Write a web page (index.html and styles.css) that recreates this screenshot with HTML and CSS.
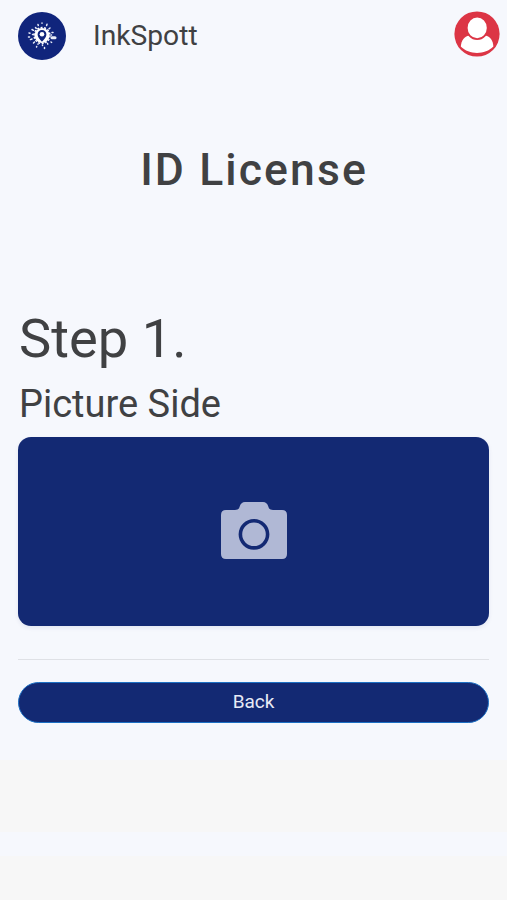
FILE: index.html
```html
<!DOCTYPE html>
<html lang="en">
<head>
<meta charset="utf-8">
<meta name="viewport" content="width=device-width, initial-scale=1">
<title>InkSpott</title>
<link rel="stylesheet" href="styles.css">
</head>
<body>
<main class="page">
  <header class="topbar">
    <svg class="logo" viewBox="0 0 48 48" aria-hidden="true">
      <circle cx="24" cy="24" r="24" fill="#10257c"/>
      <circle cx="24" cy="23.5" r="7.6" fill="#fff"/>
      <circle cx="24" cy="23.5" r="8" fill="none" stroke="#fff" stroke-width="1.4" stroke-dasharray="2 1.6"/>
      <g stroke="#e8ecf8" stroke-linecap="round" stroke-width="1.5">
        <path d="M24 11v.2M20 12.5l.3 1M29 12.2l-.4 1.4M17.5 15.5l.8 1M32 16l-1 .8M14 17.5l1.5.8M11 21l1 .2M14.5 22.5h1.2M10.5 25h1M14 27l-1.6.6M16.5 30l-1 1M20 32v.3M18.5 35l.2-.6M24.5 33v.4M26.5 35.5v1M29.5 31.5l.3.6M33 30l.6.4M34 20.5h1M33 23h.5"/>
        <path d="M34 25.8h3" stroke-width="3"/>
      </g>
      <path fill="#10257c" d="M24 18a4.4 4.4 0 0 0-4.4 4.5c0 3.1 4.4 7.3 4.4 7.3s4.4-4.2 4.4-7.3a4.4 4.4 0 0 0-4.4-4.5z"/>
      <circle cx="24" cy="22.3" r="2.3" fill="#fff"/>
    </svg>
    <span class="brand">InkSpott</span>
    <svg class="avatar" viewBox="0 0 46 46" aria-label="Account">
      <circle cx="23" cy="23" r="22.6" fill="#dc3545"/>
      <path fill="#fff" d="M6.8 35.5C7.3 29 10.5 25.4 15 24.4H31.4C36 25.4 39 29 39.4 35.5C31 44 15 44 6.8 35.5z"/>
      <ellipse cx="23.2" cy="16.9" rx="10.5" ry="11.2" fill="#fff" stroke="#dc3545" stroke-width="1.8"/>
    </svg>
  </header>
  <h1 class="title">ID License</h1>
  <section class="step">
    <h2 class="step-name">Step 1.</h2>
    <h3 class="step-side">Picture Side</h3>
    <button class="capture" aria-label="Take picture">
      <svg class="camera" viewBox="0 0 66 58">
        <path fill="#b0b8d5" d="M5 9H14Q18 9 18.7 5.5Q20 1 24 1H42Q46 1 47.3 5.5Q48 9 52 9H61Q66 9 66 14V53Q66 58 61 58H5Q0 58 0 53V14Q0 9 5 9z"/>
        <circle cx="33" cy="33.3" r="13.6" fill="none" stroke="#132973" stroke-width="3.6"/>
      </svg>
    </button>
  </section>
  <hr class="rule">
  <button class="back">Back</button>
</main>
<footer class="footer"></footer>
</body>
</html>
```
FILE: styles.css
```css
* { box-sizing: border-box; }
body {
  margin: 0;
  min-height: 900px;
  display: flex;
  flex-direction: column;
  background: #f6f8fd;
  color: #404143;
  font-family: Roboto, sans-serif;
}
h1, h2, h3 { margin: 0; font-weight: 400; }
.page {
  height: 760px;
  padding: 0 18px;
  display: flex;
  flex-direction: column;
}
.topbar {
  height: 72px;
  margin-right: -11px;
  display: flex;
  align-items: center;
}
.logo { width: 48px; height: 48px; }
.brand {
  margin-left: 27px;
  font-size: 28.2px;
  line-height: 34px;
}
.avatar {
  width: 46px;
  height: 46px;
  margin: 0 0 5px auto;
}
.title {
  margin-top: 72px;
  padding-left: 1px;
  font-size: 44.5px;
  line-height: 52px;
  font-weight: 500;
  letter-spacing: 2.1px;
  text-align: center;
}
.step {
  margin-top: 110px;
  display: flex;
  flex-direction: column;
}
.step-name {
  height: 65px;
  padding-left: 1px;
  font-size: 54.3px;
  line-height: 65px;
}
.step-side {
  height: 66px;
  padding-left: 1px;
  font-size: 38px;
  line-height: 67px;
}
.capture {
  height: 189px;
  padding: 0 0 3px;
  border: 0;
  border-radius: 13px;
  background: #132973;
  box-shadow: 0 2px 4px rgba(19, 41, 115, .08);
  display: flex;
  align-items: center;
  justify-content: center;
}
.camera { width: 66px; height: 58px; }
.rule {
  width: 100%;
  margin: 33px 0 22px;
  border: 0;
  border-top: 1px solid #dfe1e6;
}
.back {
  height: 41px;
  padding: 0 0 1px;
  border: 1px solid #1c70c4;
  border-radius: 21px;
  background: #132973;
  color: #e7eaf5;
  font: 400 19px/24px Roboto, sans-serif;
}
.footer {
  height: 140px;
  background: linear-gradient(#f7f7f7 72px, #f6f8fd 72px 96px, #f7f7f7 96px);
}
```
